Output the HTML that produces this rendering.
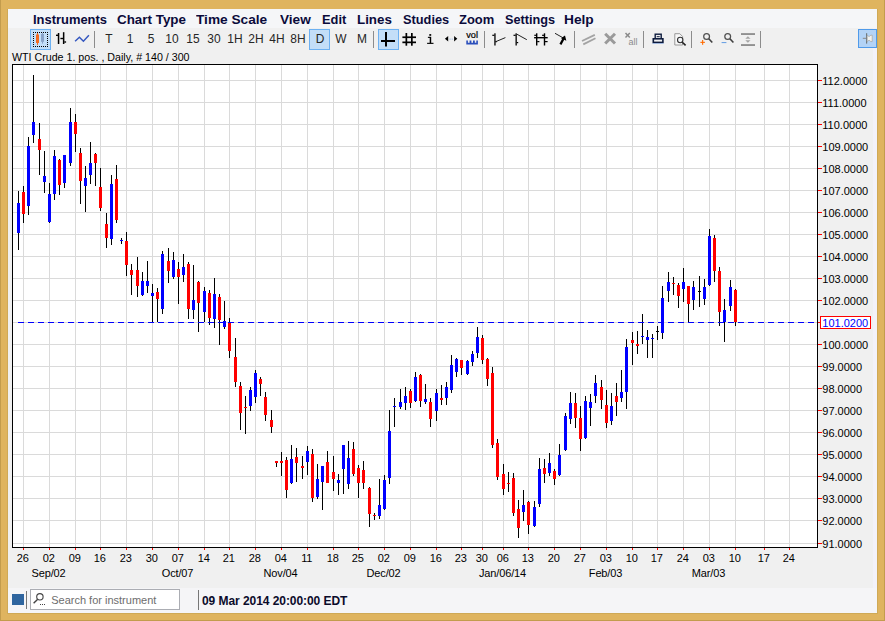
<!DOCTYPE html>
<html><head><meta charset="utf-8"><title>WTI Crude</title>
<style>
html,body{margin:0;padding:0;}
body{width:885px;height:621px;overflow:hidden;background:#dfb45f;font-family:"Liberation Sans",sans-serif;position:relative;}
#win{position:absolute;left:8px;top:9px;width:869px;height:604px;background:#f0f0f0;}
#status{position:absolute;left:8px;top:588px;width:869px;height:25px;background:#f5f5f7;}
#rstrip{position:absolute;left:873px;top:28px;width:4px;height:560px;background:#f3f2f9;}
.edge{position:absolute;background:#c39c4d;}
#menubar{position:absolute;left:8px;top:9px;width:869px;height:19px;background:#f5f6f8;}
.mi{position:absolute;top:12px;height:16px;line-height:16px;font-size:13px;font-weight:bold;color:#0b0b3b;white-space:nowrap;transform-origin:0 0;}
.tt{position:absolute;top:31px;width:30px;height:16px;line-height:16px;font-size:13px;color:#262626;text-align:center;white-space:nowrap;transform:scaleX(0.92);}
.sel{position:absolute;box-sizing:border-box;background:#c3def8;border:1px solid #6db1f2;}
#title{position:absolute;left:12px;top:51px;font-size:10.67px;line-height:12px;color:#000;white-space:nowrap;}
svg{position:absolute;left:0;top:0;}
.ax{font-family:"Liberation Sans",sans-serif;font-size:11px;fill:#000;}
#sq{position:absolute;left:12px;top:594px;width:11.6px;height:11.4px;background:#2f659f;}
#sep1{position:absolute;left:26px;top:591px;width:1px;height:18px;background:#777;}
#search{position:absolute;box-sizing:border-box;left:30px;top:589px;width:150px;height:21px;background:#fff;border:1px solid #abadb3;}
#search span{position:absolute;left:20.2px;top:3px;font-size:11px;line-height:14px;color:#6d6d6d;white-space:nowrap;}
#sep2{position:absolute;left:198px;top:590px;width:1px;height:20px;background:#777;}
#dt{position:absolute;left:202px;top:594px;font-size:12px;line-height:14px;font-weight:bold;color:#0b0b2b;letter-spacing:-0.06px;white-space:nowrap;}
</style></head><body>
<div id="win"></div><div id="status"></div><div id="rstrip"></div>
<div class="edge" style="left:0;top:0;width:1px;height:621px"></div><div class="edge" style="left:884px;top:0;width:1px;height:621px"></div><div class="edge" style="left:0;top:620px;width:885px;height:1px"></div>
<div class="edge" style="left:7px;top:9px;width:1px;height:605px;background:#cfa956"></div><div class="edge" style="left:877px;top:9px;width:1px;height:605px;background:#cfa956"></div><div class="edge" style="left:7px;top:613px;width:871px;height:1px;background:#cfa956"></div>
<div id="menubar"></div>
<span class="mi" style="left:33.38px;transform:scaleX(0.9948)">Instruments</span><span class="mi" style="left:116.92px;transform:scaleX(1.0308)">Chart Type</span><span class="mi" style="left:196.42px;transform:scaleX(1.0514)">Time Scale</span><span class="mi" style="left:279.91px;transform:scaleX(1.0460)">View</span><span class="mi" style="left:322.11px;transform:scaleX(0.9882)">Edit</span><span class="mi" style="left:356.98px;transform:scaleX(1.0277)">Lines</span><span class="mi" style="left:402.87px;transform:scaleX(0.9838)">Studies</span><span class="mi" style="left:459.05px;transform:scaleX(0.9950)">Zoom</span><span class="mi" style="left:504.87px;transform:scaleX(0.9765)">Settings</span><span class="mi" style="left:564.32px;transform:scaleX(1.0561)">Help</span>
<div class="sel" style="left:30px;top:29px;width:21px;height:21px"></div>
<div class="sel" style="left:309px;top:29px;width:21px;height:21px"></div>
<div class="sel" style="left:378px;top:29px;width:21px;height:21px"></div>
<div class="sel" style="left:858px;top:29px;width:19px;height:19px;background:#b3d3f6;border-color:#4f9aea"></div>
<span class="tt" style="left:93.5px">T</span><span class="tt" style="left:115px">1</span><span class="tt" style="left:136px">5</span><span class="tt" style="left:157px">10</span><span class="tt" style="left:178px">15</span><span class="tt" style="left:199px">30</span><span class="tt" style="left:220px">1H</span><span class="tt" style="left:241px">2H</span><span class="tt" style="left:262px">4H</span><span class="tt" style="left:283px">8H</span><span class="tt" style="left:304.5px">D</span><span class="tt" style="left:325.5px">W</span><span class="tt" style="left:346.5px">M</span>
<div id="title">WTI Crude 1. pos. , Daily, # 140 / 300</div>
<svg width="885" height="621" viewBox="0 0 885 621" shape-rendering="crispEdges">
<rect x="12" y="64" width="806" height="484" fill="#ffffff"/>
<rect x="23" y="65" width="1" height="482" fill="#dadada"/>
<rect x="49" y="65" width="1" height="482" fill="#dadada"/>
<rect x="75" y="65" width="1" height="482" fill="#dadada"/>
<rect x="100" y="65" width="1" height="482" fill="#dadada"/>
<rect x="126" y="65" width="1" height="482" fill="#dadada"/>
<rect x="152" y="65" width="1" height="482" fill="#dadada"/>
<rect x="178" y="65" width="1" height="482" fill="#dadada"/>
<rect x="204" y="65" width="1" height="482" fill="#dadada"/>
<rect x="229" y="65" width="1" height="482" fill="#dadada"/>
<rect x="255" y="65" width="1" height="482" fill="#dadada"/>
<rect x="281" y="65" width="1" height="482" fill="#dadada"/>
<rect x="307" y="65" width="1" height="482" fill="#dadada"/>
<rect x="333" y="65" width="1" height="482" fill="#dadada"/>
<rect x="358" y="65" width="1" height="482" fill="#dadada"/>
<rect x="384" y="65" width="1" height="482" fill="#dadada"/>
<rect x="410" y="65" width="1" height="482" fill="#dadada"/>
<rect x="436" y="65" width="1" height="482" fill="#dadada"/>
<rect x="461" y="65" width="1" height="482" fill="#dadada"/>
<rect x="482" y="65" width="1" height="482" fill="#dadada"/>
<rect x="503" y="65" width="1" height="482" fill="#dadada"/>
<rect x="528" y="65" width="1" height="482" fill="#dadada"/>
<rect x="554" y="65" width="1" height="482" fill="#dadada"/>
<rect x="580" y="65" width="1" height="482" fill="#dadada"/>
<rect x="606" y="65" width="1" height="482" fill="#dadada"/>
<rect x="632" y="65" width="1" height="482" fill="#dadada"/>
<rect x="657" y="65" width="1" height="482" fill="#dadada"/>
<rect x="683" y="65" width="1" height="482" fill="#dadada"/>
<rect x="709" y="65" width="1" height="482" fill="#dadada"/>
<rect x="735" y="65" width="1" height="482" fill="#dadada"/>
<rect x="764" y="65" width="1" height="482" fill="#dadada"/>
<rect x="789" y="65" width="1" height="482" fill="#dadada"/>
<rect x="13" y="80" width="804" height="1" fill="#dadada"/>
<rect x="13" y="102" width="804" height="1" fill="#dadada"/>
<rect x="13" y="124" width="804" height="1" fill="#dadada"/>
<rect x="13" y="146" width="804" height="1" fill="#dadada"/>
<rect x="13" y="168" width="804" height="1" fill="#dadada"/>
<rect x="13" y="190" width="804" height="1" fill="#dadada"/>
<rect x="13" y="212" width="804" height="1" fill="#dadada"/>
<rect x="13" y="234" width="804" height="1" fill="#dadada"/>
<rect x="13" y="256" width="804" height="1" fill="#dadada"/>
<rect x="13" y="278" width="804" height="1" fill="#dadada"/>
<rect x="13" y="300" width="804" height="1" fill="#dadada"/>
<rect x="13" y="322" width="804" height="1" fill="#dadada"/>
<rect x="13" y="344" width="804" height="1" fill="#dadada"/>
<rect x="13" y="366" width="804" height="1" fill="#dadada"/>
<rect x="13" y="388" width="804" height="1" fill="#dadada"/>
<rect x="13" y="410" width="804" height="1" fill="#dadada"/>
<rect x="13" y="432" width="804" height="1" fill="#dadada"/>
<rect x="13" y="454" width="804" height="1" fill="#dadada"/>
<rect x="13" y="476" width="804" height="1" fill="#dadada"/>
<rect x="13" y="498" width="804" height="1" fill="#dadada"/>
<rect x="13" y="520" width="804" height="1" fill="#dadada"/>
<rect x="13" y="543" width="804" height="1" fill="#dadada"/>
<rect x="18" y="191" width="1" height="59" fill="#000"/>
<rect x="17" y="203" width="3" height="30" fill="#0000ff"/>
<rect x="23" y="186" width="1" height="37" fill="#000"/>
<rect x="22" y="192" width="3" height="22" fill="#ff0000"/>
<rect x="28" y="137" width="1" height="78" fill="#000"/>
<rect x="27" y="146" width="3" height="60" fill="#0000ff"/>
<rect x="33" y="75" width="1" height="68" fill="#000"/>
<rect x="32" y="122" width="3" height="13" fill="#0000ff"/>
<rect x="39" y="123" width="1" height="52" fill="#000"/>
<rect x="38" y="139" width="3" height="11" fill="#ff0000"/>
<rect x="44" y="151" width="1" height="42" fill="#000"/>
<rect x="43" y="176" width="3" height="6" fill="#0000ff"/>
<rect x="49" y="183" width="1" height="40" fill="#000"/>
<rect x="48" y="194" width="3" height="28" fill="#0000ff"/>
<rect x="54" y="150" width="1" height="50" fill="#000"/>
<rect x="53" y="156" width="3" height="38" fill="#0000ff"/>
<rect x="59" y="159" width="1" height="36" fill="#000"/>
<rect x="58" y="160" width="3" height="25" fill="#ff0000"/>
<rect x="64" y="155" width="1" height="33" fill="#000"/>
<rect x="63" y="155" width="3" height="28" fill="#0000ff"/>
<rect x="70" y="108" width="1" height="58" fill="#000"/>
<rect x="69" y="122" width="3" height="41" fill="#0000ff"/>
<rect x="75" y="114" width="1" height="38" fill="#000"/>
<rect x="74" y="122" width="3" height="12" fill="#ff0000"/>
<rect x="80" y="148" width="1" height="56" fill="#000"/>
<rect x="79" y="153" width="3" height="28" fill="#ff0000"/>
<rect x="85" y="166" width="1" height="46" fill="#000"/>
<rect x="84" y="178" width="3" height="8" fill="#0000ff"/>
<rect x="90" y="142" width="1" height="42" fill="#000"/>
<rect x="89" y="163" width="3" height="12" fill="#0000ff"/>
<rect x="95" y="153" width="1" height="33" fill="#000"/>
<rect x="94" y="154" width="3" height="9" fill="#ff0000"/>
<rect x="100" y="168" width="1" height="43" fill="#000"/>
<rect x="99" y="187" width="3" height="21" fill="#ff0000"/>
<rect x="106" y="213" width="1" height="35" fill="#000"/>
<rect x="105" y="224" width="3" height="14" fill="#ff0000"/>
<rect x="111" y="175" width="1" height="70" fill="#000"/>
<rect x="110" y="184" width="3" height="55" fill="#0000ff"/>
<rect x="116" y="165" width="1" height="58" fill="#000"/>
<rect x="115" y="179" width="3" height="41" fill="#ff0000"/>
<rect x="121" y="238" width="1" height="6" fill="#000"/>
<rect x="120" y="240" width="3" height="1" fill="#0000ff"/>
<rect x="126" y="232" width="1" height="44" fill="#000"/>
<rect x="125" y="241" width="3" height="24" fill="#ff0000"/>
<rect x="131" y="264" width="1" height="31" fill="#000"/>
<rect x="130" y="270" width="3" height="5" fill="#ff0000"/>
<rect x="137" y="257" width="1" height="40" fill="#000"/>
<rect x="136" y="270" width="3" height="16" fill="#ff0000"/>
<rect x="142" y="272" width="1" height="24" fill="#000"/>
<rect x="141" y="281" width="3" height="14" fill="#0000ff"/>
<rect x="147" y="261" width="1" height="32" fill="#000"/>
<rect x="146" y="281" width="3" height="5" fill="#0000ff"/>
<rect x="152" y="284" width="1" height="38" fill="#000"/>
<rect x="151" y="293" width="3" height="3" fill="#0000ff"/>
<rect x="157" y="288" width="1" height="34" fill="#000"/>
<rect x="156" y="292" width="3" height="7" fill="#ff0000"/>
<rect x="162" y="251" width="1" height="63" fill="#000"/>
<rect x="161" y="254" width="3" height="55" fill="#0000ff"/>
<rect x="168" y="248" width="1" height="35" fill="#000"/>
<rect x="167" y="261" width="3" height="10" fill="#ff0000"/>
<rect x="173" y="252" width="1" height="27" fill="#000"/>
<rect x="172" y="260" width="3" height="17" fill="#0000ff"/>
<rect x="178" y="262" width="1" height="42" fill="#000"/>
<rect x="177" y="269" width="3" height="8" fill="#ff0000"/>
<rect x="183" y="254" width="1" height="28" fill="#000"/>
<rect x="182" y="267" width="3" height="8" fill="#0000ff"/>
<rect x="188" y="262" width="1" height="57" fill="#000"/>
<rect x="187" y="264" width="3" height="45" fill="#ff0000"/>
<rect x="193" y="265" width="1" height="54" fill="#000"/>
<rect x="192" y="300" width="3" height="10" fill="#0000ff"/>
<rect x="198" y="281" width="1" height="51" fill="#000"/>
<rect x="197" y="282" width="3" height="21" fill="#ff0000"/>
<rect x="204" y="287" width="1" height="35" fill="#000"/>
<rect x="203" y="291" width="3" height="21" fill="#0000ff"/>
<rect x="209" y="290" width="1" height="35" fill="#000"/>
<rect x="208" y="293" width="3" height="25" fill="#ff0000"/>
<rect x="214" y="278" width="1" height="50" fill="#000"/>
<rect x="213" y="294" width="3" height="25" fill="#0000ff"/>
<rect x="219" y="294" width="1" height="51" fill="#000"/>
<rect x="218" y="297" width="3" height="23" fill="#ff0000"/>
<rect x="224" y="301" width="1" height="28" fill="#000"/>
<rect x="223" y="321" width="3" height="6" fill="#0000ff"/>
<rect x="229" y="318" width="1" height="40" fill="#000"/>
<rect x="228" y="323" width="3" height="28" fill="#ff0000"/>
<rect x="235" y="338" width="1" height="49" fill="#000"/>
<rect x="234" y="357" width="3" height="25" fill="#ff0000"/>
<rect x="240" y="382" width="1" height="48" fill="#000"/>
<rect x="239" y="386" width="3" height="27" fill="#ff0000"/>
<rect x="245" y="396" width="1" height="38" fill="#000"/>
<rect x="244" y="407" width="3" height="1" fill="#ff0000"/>
<rect x="250" y="387" width="1" height="24" fill="#000"/>
<rect x="249" y="390" width="3" height="16" fill="#0000ff"/>
<rect x="255" y="370" width="1" height="33" fill="#000"/>
<rect x="254" y="373" width="3" height="24" fill="#0000ff"/>
<rect x="260" y="377" width="1" height="19" fill="#000"/>
<rect x="259" y="379" width="3" height="5" fill="#ff0000"/>
<rect x="265" y="392" width="1" height="29" fill="#000"/>
<rect x="264" y="397" width="3" height="18" fill="#ff0000"/>
<rect x="271" y="410" width="1" height="23" fill="#000"/>
<rect x="270" y="420" width="3" height="7" fill="#ff0000"/>
<rect x="276" y="461" width="1" height="6" fill="#000"/>
<rect x="275" y="461" width="3" height="2" fill="#ff0000"/>
<rect x="281" y="452" width="1" height="24" fill="#000"/>
<rect x="280" y="461" width="3" height="2" fill="#ff0000"/>
<rect x="286" y="457" width="1" height="41" fill="#000"/>
<rect x="285" y="460" width="3" height="30" fill="#ff0000"/>
<rect x="291" y="445" width="1" height="39" fill="#000"/>
<rect x="290" y="459" width="3" height="24" fill="#0000ff"/>
<rect x="296" y="448" width="1" height="34" fill="#000"/>
<rect x="295" y="457" width="3" height="6" fill="#ff0000"/>
<rect x="302" y="456" width="1" height="23" fill="#000"/>
<rect x="301" y="466" width="3" height="2" fill="#ff0000"/>
<rect x="307" y="446" width="1" height="29" fill="#000"/>
<rect x="306" y="451" width="3" height="11" fill="#0000ff"/>
<rect x="312" y="449" width="1" height="53" fill="#000"/>
<rect x="311" y="454" width="3" height="44" fill="#ff0000"/>
<rect x="317" y="464" width="1" height="35" fill="#000"/>
<rect x="316" y="479" width="3" height="18" fill="#0000ff"/>
<rect x="322" y="466" width="1" height="44" fill="#000"/>
<rect x="321" y="466" width="3" height="16" fill="#0000ff"/>
<rect x="327" y="451" width="1" height="32" fill="#000"/>
<rect x="326" y="462" width="3" height="21" fill="#ff0000"/>
<rect x="333" y="456" width="1" height="35" fill="#000"/>
<rect x="332" y="472" width="3" height="7" fill="#ff0000"/>
<rect x="338" y="474" width="1" height="21" fill="#000"/>
<rect x="337" y="480" width="3" height="3" fill="#0000ff"/>
<rect x="343" y="445" width="1" height="49" fill="#000"/>
<rect x="342" y="445" width="3" height="24" fill="#0000ff"/>
<rect x="348" y="441" width="1" height="48" fill="#000"/>
<rect x="347" y="458" width="3" height="26" fill="#0000ff"/>
<rect x="353" y="442" width="1" height="34" fill="#000"/>
<rect x="352" y="449" width="3" height="25" fill="#ff0000"/>
<rect x="358" y="465" width="1" height="33" fill="#000"/>
<rect x="357" y="468" width="3" height="15" fill="#ff0000"/>
<rect x="363" y="461" width="1" height="28" fill="#000"/>
<rect x="362" y="470" width="3" height="13" fill="#ff0000"/>
<rect x="369" y="487" width="1" height="40" fill="#000"/>
<rect x="368" y="488" width="3" height="26" fill="#ff0000"/>
<rect x="374" y="513" width="1" height="7" fill="#000"/>
<rect x="373" y="515" width="3" height="1" fill="#ff0000"/>
<rect x="379" y="479" width="1" height="40" fill="#000"/>
<rect x="378" y="505" width="3" height="11" fill="#0000ff"/>
<rect x="384" y="475" width="1" height="35" fill="#000"/>
<rect x="383" y="480" width="3" height="29" fill="#0000ff"/>
<rect x="389" y="410" width="1" height="74" fill="#000"/>
<rect x="388" y="431" width="3" height="47" fill="#0000ff"/>
<rect x="394" y="398" width="1" height="29" fill="#000"/>
<rect x="393" y="406" width="3" height="1" fill="#0000ff"/>
<rect x="400" y="389" width="1" height="20" fill="#000"/>
<rect x="399" y="402" width="3" height="5" fill="#0000ff"/>
<rect x="405" y="387" width="1" height="23" fill="#000"/>
<rect x="404" y="396" width="3" height="7" fill="#0000ff"/>
<rect x="410" y="389" width="1" height="19" fill="#000"/>
<rect x="409" y="391" width="3" height="12" fill="#ff0000"/>
<rect x="415" y="372" width="1" height="30" fill="#000"/>
<rect x="414" y="377" width="3" height="24" fill="#0000ff"/>
<rect x="420" y="374" width="1" height="33" fill="#000"/>
<rect x="419" y="375" width="3" height="26" fill="#ff0000"/>
<rect x="425" y="384" width="1" height="20" fill="#000"/>
<rect x="424" y="399" width="3" height="3" fill="#0000ff"/>
<rect x="430" y="398" width="1" height="29" fill="#000"/>
<rect x="429" y="402" width="3" height="17" fill="#ff0000"/>
<rect x="436" y="389" width="1" height="32" fill="#000"/>
<rect x="435" y="393" width="3" height="18" fill="#0000ff"/>
<rect x="441" y="385" width="1" height="20" fill="#000"/>
<rect x="440" y="398" width="3" height="2" fill="#ff0000"/>
<rect x="446" y="382" width="1" height="23" fill="#000"/>
<rect x="445" y="387" width="3" height="11" fill="#0000ff"/>
<rect x="451" y="355" width="1" height="38" fill="#000"/>
<rect x="450" y="365" width="3" height="25" fill="#0000ff"/>
<rect x="456" y="358" width="1" height="19" fill="#000"/>
<rect x="455" y="359" width="3" height="13" fill="#0000ff"/>
<rect x="461" y="360" width="1" height="15" fill="#000"/>
<rect x="460" y="360" width="3" height="8" fill="#ff0000"/>
<rect x="467" y="360" width="1" height="15" fill="#000"/>
<rect x="466" y="361" width="3" height="13" fill="#0000ff"/>
<rect x="472" y="351" width="1" height="15" fill="#000"/>
<rect x="471" y="354" width="3" height="8" fill="#0000ff"/>
<rect x="477" y="327" width="1" height="31" fill="#000"/>
<rect x="476" y="337" width="3" height="16" fill="#0000ff"/>
<rect x="482" y="335" width="1" height="29" fill="#000"/>
<rect x="481" y="338" width="3" height="22" fill="#ff0000"/>
<rect x="487" y="358" width="1" height="28" fill="#000"/>
<rect x="486" y="359" width="3" height="20" fill="#ff0000"/>
<rect x="492" y="367" width="1" height="81" fill="#000"/>
<rect x="491" y="373" width="3" height="72" fill="#ff0000"/>
<rect x="497" y="439" width="1" height="41" fill="#000"/>
<rect x="496" y="443" width="3" height="34" fill="#ff0000"/>
<rect x="503" y="464" width="1" height="31" fill="#000"/>
<rect x="502" y="474" width="3" height="15" fill="#ff0000"/>
<rect x="508" y="472" width="1" height="20" fill="#000"/>
<rect x="507" y="483" width="3" height="1" fill="#ff0000"/>
<rect x="513" y="473" width="1" height="43" fill="#000"/>
<rect x="512" y="478" width="3" height="35" fill="#ff0000"/>
<rect x="518" y="500" width="1" height="38" fill="#000"/>
<rect x="517" y="509" width="3" height="19" fill="#ff0000"/>
<rect x="523" y="490" width="1" height="31" fill="#000"/>
<rect x="522" y="505" width="3" height="7" fill="#0000ff"/>
<rect x="528" y="501" width="1" height="33" fill="#000"/>
<rect x="527" y="502" width="3" height="23" fill="#ff0000"/>
<rect x="534" y="501" width="1" height="26" fill="#000"/>
<rect x="533" y="507" width="3" height="19" fill="#0000ff"/>
<rect x="539" y="458" width="1" height="49" fill="#000"/>
<rect x="538" y="469" width="3" height="35" fill="#0000ff"/>
<rect x="544" y="459" width="1" height="24" fill="#000"/>
<rect x="543" y="468" width="3" height="6" fill="#ff0000"/>
<rect x="549" y="453" width="1" height="23" fill="#000"/>
<rect x="548" y="463" width="3" height="10" fill="#0000ff"/>
<rect x="554" y="469" width="1" height="16" fill="#000"/>
<rect x="553" y="471" width="3" height="8" fill="#ff0000"/>
<rect x="559" y="444" width="1" height="32" fill="#000"/>
<rect x="558" y="455" width="3" height="20" fill="#0000ff"/>
<rect x="565" y="413" width="1" height="38" fill="#000"/>
<rect x="564" y="416" width="3" height="34" fill="#0000ff"/>
<rect x="570" y="392" width="1" height="32" fill="#000"/>
<rect x="569" y="403" width="3" height="16" fill="#0000ff"/>
<rect x="575" y="393" width="1" height="35" fill="#000"/>
<rect x="574" y="403" width="3" height="15" fill="#ff0000"/>
<rect x="580" y="406" width="1" height="45" fill="#000"/>
<rect x="579" y="418" width="3" height="21" fill="#ff0000"/>
<rect x="585" y="396" width="1" height="43" fill="#000"/>
<rect x="584" y="401" width="3" height="37" fill="#0000ff"/>
<rect x="590" y="394" width="1" height="32" fill="#000"/>
<rect x="589" y="402" width="3" height="6" fill="#0000ff"/>
<rect x="595" y="375" width="1" height="28" fill="#000"/>
<rect x="594" y="383" width="3" height="13" fill="#0000ff"/>
<rect x="601" y="380" width="1" height="29" fill="#000"/>
<rect x="600" y="387" width="3" height="13" fill="#ff0000"/>
<rect x="606" y="390" width="1" height="38" fill="#000"/>
<rect x="605" y="405" width="3" height="18" fill="#ff0000"/>
<rect x="611" y="393" width="1" height="32" fill="#000"/>
<rect x="610" y="406" width="3" height="15" fill="#0000ff"/>
<rect x="616" y="383" width="1" height="33" fill="#000"/>
<rect x="615" y="396" width="3" height="6" fill="#ff0000"/>
<rect x="621" y="370" width="1" height="32" fill="#000"/>
<rect x="620" y="392" width="3" height="6" fill="#0000ff"/>
<rect x="626" y="339" width="1" height="70" fill="#000"/>
<rect x="625" y="347" width="3" height="45" fill="#0000ff"/>
<rect x="632" y="332" width="1" height="33" fill="#000"/>
<rect x="631" y="340" width="3" height="3" fill="#ff0000"/>
<rect x="637" y="331" width="1" height="23" fill="#000"/>
<rect x="636" y="344" width="3" height="2" fill="#ff0000"/>
<rect x="642" y="314" width="1" height="30" fill="#000"/>
<rect x="641" y="336" width="3" height="1" fill="#0000ff"/>
<rect x="647" y="330" width="1" height="28" fill="#000"/>
<rect x="646" y="337" width="3" height="3" fill="#0000ff"/>
<rect x="652" y="334" width="1" height="24" fill="#000"/>
<rect x="651" y="338" width="3" height="1" fill="#0000ff"/>
<rect x="657" y="326" width="1" height="14" fill="#000"/>
<rect x="656" y="331" width="3" height="1" fill="#000000"/>
<rect x="662" y="286" width="1" height="53" fill="#000"/>
<rect x="661" y="298" width="3" height="35" fill="#0000ff"/>
<rect x="668" y="272" width="1" height="30" fill="#000"/>
<rect x="667" y="282" width="3" height="9" fill="#0000ff"/>
<rect x="673" y="277" width="1" height="18" fill="#000"/>
<rect x="672" y="283" width="3" height="1" fill="#ff0000"/>
<rect x="678" y="283" width="1" height="25" fill="#000"/>
<rect x="677" y="285" width="3" height="11" fill="#ff0000"/>
<rect x="683" y="268" width="1" height="34" fill="#000"/>
<rect x="682" y="282" width="3" height="7" fill="#0000ff"/>
<rect x="688" y="286" width="1" height="36" fill="#000"/>
<rect x="687" y="286" width="3" height="18" fill="#ff0000"/>
<rect x="693" y="281" width="1" height="29" fill="#000"/>
<rect x="692" y="287" width="3" height="13" fill="#0000ff"/>
<rect x="699" y="276" width="1" height="31" fill="#000"/>
<rect x="698" y="291" width="3" height="1" fill="#000000"/>
<rect x="704" y="279" width="1" height="26" fill="#000"/>
<rect x="703" y="287" width="3" height="12" fill="#0000ff"/>
<rect x="709" y="229" width="1" height="57" fill="#000"/>
<rect x="708" y="236" width="3" height="49" fill="#0000ff"/>
<rect x="714" y="235" width="1" height="47" fill="#000"/>
<rect x="713" y="238" width="3" height="33" fill="#ff0000"/>
<rect x="719" y="267" width="1" height="59" fill="#000"/>
<rect x="718" y="271" width="3" height="41" fill="#ff0000"/>
<rect x="724" y="299" width="1" height="43" fill="#000"/>
<rect x="723" y="310" width="3" height="12" fill="#0000ff"/>
<rect x="730" y="280" width="1" height="31" fill="#000"/>
<rect x="729" y="287" width="3" height="19" fill="#0000ff"/>
<rect x="735" y="289" width="1" height="37" fill="#000"/>
<rect x="734" y="290" width="3" height="32" fill="#ff0000"/>
<rect x="18" y="322" width="6" height="1" fill="#0000ff"/>
<rect x="28" y="322" width="6" height="1" fill="#0000ff"/>
<rect x="38" y="322" width="6" height="1" fill="#0000ff"/>
<rect x="48" y="322" width="6" height="1" fill="#0000ff"/>
<rect x="58" y="322" width="6" height="1" fill="#0000ff"/>
<rect x="68" y="322" width="6" height="1" fill="#0000ff"/>
<rect x="78" y="322" width="6" height="1" fill="#0000ff"/>
<rect x="88" y="322" width="6" height="1" fill="#0000ff"/>
<rect x="98" y="322" width="6" height="1" fill="#0000ff"/>
<rect x="108" y="322" width="6" height="1" fill="#0000ff"/>
<rect x="118" y="322" width="6" height="1" fill="#0000ff"/>
<rect x="128" y="322" width="6" height="1" fill="#0000ff"/>
<rect x="138" y="322" width="6" height="1" fill="#0000ff"/>
<rect x="148" y="322" width="6" height="1" fill="#0000ff"/>
<rect x="158" y="322" width="6" height="1" fill="#0000ff"/>
<rect x="168" y="322" width="6" height="1" fill="#0000ff"/>
<rect x="178" y="322" width="6" height="1" fill="#0000ff"/>
<rect x="188" y="322" width="6" height="1" fill="#0000ff"/>
<rect x="198" y="322" width="6" height="1" fill="#0000ff"/>
<rect x="208" y="322" width="6" height="1" fill="#0000ff"/>
<rect x="218" y="322" width="6" height="1" fill="#0000ff"/>
<rect x="228" y="322" width="6" height="1" fill="#0000ff"/>
<rect x="238" y="322" width="6" height="1" fill="#0000ff"/>
<rect x="248" y="322" width="6" height="1" fill="#0000ff"/>
<rect x="258" y="322" width="6" height="1" fill="#0000ff"/>
<rect x="268" y="322" width="6" height="1" fill="#0000ff"/>
<rect x="278" y="322" width="6" height="1" fill="#0000ff"/>
<rect x="288" y="322" width="6" height="1" fill="#0000ff"/>
<rect x="298" y="322" width="6" height="1" fill="#0000ff"/>
<rect x="308" y="322" width="6" height="1" fill="#0000ff"/>
<rect x="318" y="322" width="6" height="1" fill="#0000ff"/>
<rect x="328" y="322" width="6" height="1" fill="#0000ff"/>
<rect x="338" y="322" width="6" height="1" fill="#0000ff"/>
<rect x="348" y="322" width="6" height="1" fill="#0000ff"/>
<rect x="358" y="322" width="6" height="1" fill="#0000ff"/>
<rect x="368" y="322" width="6" height="1" fill="#0000ff"/>
<rect x="378" y="322" width="6" height="1" fill="#0000ff"/>
<rect x="388" y="322" width="6" height="1" fill="#0000ff"/>
<rect x="398" y="322" width="6" height="1" fill="#0000ff"/>
<rect x="408" y="322" width="6" height="1" fill="#0000ff"/>
<rect x="418" y="322" width="6" height="1" fill="#0000ff"/>
<rect x="428" y="322" width="6" height="1" fill="#0000ff"/>
<rect x="438" y="322" width="6" height="1" fill="#0000ff"/>
<rect x="448" y="322" width="6" height="1" fill="#0000ff"/>
<rect x="458" y="322" width="6" height="1" fill="#0000ff"/>
<rect x="468" y="322" width="6" height="1" fill="#0000ff"/>
<rect x="478" y="322" width="6" height="1" fill="#0000ff"/>
<rect x="488" y="322" width="6" height="1" fill="#0000ff"/>
<rect x="498" y="322" width="6" height="1" fill="#0000ff"/>
<rect x="508" y="322" width="6" height="1" fill="#0000ff"/>
<rect x="518" y="322" width="6" height="1" fill="#0000ff"/>
<rect x="528" y="322" width="6" height="1" fill="#0000ff"/>
<rect x="538" y="322" width="6" height="1" fill="#0000ff"/>
<rect x="548" y="322" width="6" height="1" fill="#0000ff"/>
<rect x="558" y="322" width="6" height="1" fill="#0000ff"/>
<rect x="568" y="322" width="6" height="1" fill="#0000ff"/>
<rect x="578" y="322" width="6" height="1" fill="#0000ff"/>
<rect x="588" y="322" width="6" height="1" fill="#0000ff"/>
<rect x="598" y="322" width="6" height="1" fill="#0000ff"/>
<rect x="608" y="322" width="6" height="1" fill="#0000ff"/>
<rect x="618" y="322" width="6" height="1" fill="#0000ff"/>
<rect x="628" y="322" width="6" height="1" fill="#0000ff"/>
<rect x="638" y="322" width="6" height="1" fill="#0000ff"/>
<rect x="648" y="322" width="6" height="1" fill="#0000ff"/>
<rect x="658" y="322" width="6" height="1" fill="#0000ff"/>
<rect x="668" y="322" width="6" height="1" fill="#0000ff"/>
<rect x="678" y="322" width="6" height="1" fill="#0000ff"/>
<rect x="688" y="322" width="6" height="1" fill="#0000ff"/>
<rect x="698" y="322" width="6" height="1" fill="#0000ff"/>
<rect x="708" y="322" width="6" height="1" fill="#0000ff"/>
<rect x="718" y="322" width="6" height="1" fill="#0000ff"/>
<rect x="728" y="322" width="6" height="1" fill="#0000ff"/>
<rect x="738" y="322" width="6" height="1" fill="#0000ff"/>
<rect x="748" y="322" width="6" height="1" fill="#0000ff"/>
<rect x="758" y="322" width="6" height="1" fill="#0000ff"/>
<rect x="768" y="322" width="6" height="1" fill="#0000ff"/>
<rect x="778" y="322" width="6" height="1" fill="#0000ff"/>
<rect x="788" y="322" width="6" height="1" fill="#0000ff"/>
<rect x="798" y="322" width="6" height="1" fill="#0000ff"/>
<rect x="808" y="322" width="6" height="1" fill="#0000ff"/>
<rect x="12" y="64" width="806" height="1" fill="#000"/>
<rect x="12" y="547" width="806" height="1" fill="#000"/>
<rect x="12" y="64" width="1" height="484" fill="#000"/>
<rect x="817" y="64" width="1" height="484" fill="#000"/>
<rect x="818" y="80" width="4" height="1" fill="#ff0000"/>
<text x="822.3" y="84.6" class="ax">112.0000</text>
<rect x="818" y="102" width="4" height="1" fill="#ff0000"/>
<text x="822.3" y="106.6" class="ax">111.0000</text>
<rect x="818" y="124" width="4" height="1" fill="#ff0000"/>
<text x="822.3" y="128.6" class="ax">110.0000</text>
<rect x="818" y="146" width="4" height="1" fill="#ff0000"/>
<text x="822.3" y="150.6" class="ax">109.0000</text>
<rect x="818" y="168" width="4" height="1" fill="#ff0000"/>
<text x="822.3" y="172.6" class="ax">108.0000</text>
<rect x="818" y="190" width="4" height="1" fill="#ff0000"/>
<text x="822.3" y="194.6" class="ax">107.0000</text>
<rect x="818" y="212" width="4" height="1" fill="#ff0000"/>
<text x="822.3" y="216.6" class="ax">106.0000</text>
<rect x="818" y="234" width="4" height="1" fill="#ff0000"/>
<text x="822.3" y="238.6" class="ax">105.0000</text>
<rect x="818" y="256" width="4" height="1" fill="#ff0000"/>
<text x="822.3" y="260.6" class="ax">104.0000</text>
<rect x="818" y="278" width="4" height="1" fill="#ff0000"/>
<text x="822.3" y="282.6" class="ax">103.0000</text>
<rect x="818" y="300" width="4" height="1" fill="#ff0000"/>
<text x="822.3" y="304.6" class="ax">102.0000</text>
<rect x="818" y="322" width="4" height="1" fill="#ff0000"/>
<text x="822.3" y="326.6" class="ax">101.0000</text>
<rect x="818" y="344" width="4" height="1" fill="#ff0000"/>
<text x="822.3" y="348.6" class="ax">100.0000</text>
<rect x="818" y="366" width="4" height="1" fill="#ff0000"/>
<text x="822.3" y="370.6" class="ax">99.0000</text>
<rect x="818" y="388" width="4" height="1" fill="#ff0000"/>
<text x="822.3" y="392.6" class="ax">98.0000</text>
<rect x="818" y="410" width="4" height="1" fill="#ff0000"/>
<text x="822.3" y="414.6" class="ax">97.0000</text>
<rect x="818" y="432" width="4" height="1" fill="#ff0000"/>
<text x="822.3" y="436.6" class="ax">96.0000</text>
<rect x="818" y="454" width="4" height="1" fill="#ff0000"/>
<text x="822.3" y="458.6" class="ax">95.0000</text>
<rect x="818" y="476" width="4" height="1" fill="#ff0000"/>
<text x="822.3" y="480.6" class="ax">94.0000</text>
<rect x="818" y="498" width="4" height="1" fill="#ff0000"/>
<text x="822.3" y="502.6" class="ax">93.0000</text>
<rect x="818" y="520" width="4" height="1" fill="#ff0000"/>
<text x="822.3" y="524.6" class="ax">92.0000</text>
<rect x="818" y="543" width="4" height="1" fill="#ff0000"/>
<text x="822.3" y="547.6" class="ax">91.0000</text>
<rect x="23" y="548" width="1" height="2" fill="#ff0000"/>
<text x="22.7" y="562" class="ax" text-anchor="middle" letter-spacing="-0.2">26</text>
<rect x="49" y="548" width="1" height="2" fill="#ff0000"/>
<text x="48.7" y="562" class="ax" text-anchor="middle" letter-spacing="-0.2">02</text>
<rect x="75" y="548" width="1" height="2" fill="#ff0000"/>
<text x="74.7" y="562" class="ax" text-anchor="middle" letter-spacing="-0.2">09</text>
<rect x="100" y="548" width="1" height="2" fill="#ff0000"/>
<text x="99.7" y="562" class="ax" text-anchor="middle" letter-spacing="-0.2">16</text>
<rect x="126" y="548" width="1" height="2" fill="#ff0000"/>
<text x="125.7" y="562" class="ax" text-anchor="middle" letter-spacing="-0.2">23</text>
<rect x="152" y="548" width="1" height="2" fill="#ff0000"/>
<text x="151.7" y="562" class="ax" text-anchor="middle" letter-spacing="-0.2">30</text>
<rect x="178" y="548" width="1" height="2" fill="#ff0000"/>
<text x="177.7" y="562" class="ax" text-anchor="middle" letter-spacing="-0.2">07</text>
<rect x="204" y="548" width="1" height="2" fill="#ff0000"/>
<text x="203.7" y="562" class="ax" text-anchor="middle" letter-spacing="-0.2">14</text>
<rect x="229" y="548" width="1" height="2" fill="#ff0000"/>
<text x="228.7" y="562" class="ax" text-anchor="middle" letter-spacing="-0.2">21</text>
<rect x="255" y="548" width="1" height="2" fill="#ff0000"/>
<text x="254.7" y="562" class="ax" text-anchor="middle" letter-spacing="-0.2">28</text>
<rect x="281" y="548" width="1" height="2" fill="#ff0000"/>
<text x="280.7" y="562" class="ax" text-anchor="middle" letter-spacing="-0.2">04</text>
<rect x="307" y="548" width="1" height="2" fill="#ff0000"/>
<text x="306.7" y="562" class="ax" text-anchor="middle" letter-spacing="-0.2">11</text>
<rect x="333" y="548" width="1" height="2" fill="#ff0000"/>
<text x="332.7" y="562" class="ax" text-anchor="middle" letter-spacing="-0.2">18</text>
<rect x="358" y="548" width="1" height="2" fill="#ff0000"/>
<text x="357.7" y="562" class="ax" text-anchor="middle" letter-spacing="-0.2">25</text>
<rect x="384" y="548" width="1" height="2" fill="#ff0000"/>
<text x="383.7" y="562" class="ax" text-anchor="middle" letter-spacing="-0.2">02</text>
<rect x="410" y="548" width="1" height="2" fill="#ff0000"/>
<text x="409.7" y="562" class="ax" text-anchor="middle" letter-spacing="-0.2">09</text>
<rect x="436" y="548" width="1" height="2" fill="#ff0000"/>
<text x="435.7" y="562" class="ax" text-anchor="middle" letter-spacing="-0.2">16</text>
<rect x="461" y="548" width="1" height="2" fill="#ff0000"/>
<text x="460.7" y="562" class="ax" text-anchor="middle" letter-spacing="-0.2">23</text>
<rect x="482" y="548" width="1" height="2" fill="#ff0000"/>
<text x="481.7" y="562" class="ax" text-anchor="middle" letter-spacing="-0.2">30</text>
<rect x="503" y="548" width="1" height="2" fill="#ff0000"/>
<text x="502.7" y="562" class="ax" text-anchor="middle" letter-spacing="-0.2">06</text>
<rect x="528" y="548" width="1" height="2" fill="#ff0000"/>
<text x="527.7" y="562" class="ax" text-anchor="middle" letter-spacing="-0.2">13</text>
<rect x="554" y="548" width="1" height="2" fill="#ff0000"/>
<text x="553.7" y="562" class="ax" text-anchor="middle" letter-spacing="-0.2">20</text>
<rect x="580" y="548" width="1" height="2" fill="#ff0000"/>
<text x="579.7" y="562" class="ax" text-anchor="middle" letter-spacing="-0.2">27</text>
<rect x="606" y="548" width="1" height="2" fill="#ff0000"/>
<text x="605.7" y="562" class="ax" text-anchor="middle" letter-spacing="-0.2">03</text>
<rect x="632" y="548" width="1" height="2" fill="#ff0000"/>
<text x="631.7" y="562" class="ax" text-anchor="middle" letter-spacing="-0.2">10</text>
<rect x="657" y="548" width="1" height="2" fill="#ff0000"/>
<text x="656.7" y="562" class="ax" text-anchor="middle" letter-spacing="-0.2">17</text>
<rect x="683" y="548" width="1" height="2" fill="#ff0000"/>
<text x="682.7" y="562" class="ax" text-anchor="middle" letter-spacing="-0.2">24</text>
<rect x="709" y="548" width="1" height="2" fill="#ff0000"/>
<text x="708.7" y="562" class="ax" text-anchor="middle" letter-spacing="-0.2">03</text>
<rect x="735" y="548" width="1" height="2" fill="#ff0000"/>
<text x="734.7" y="562" class="ax" text-anchor="middle" letter-spacing="-0.2">10</text>
<rect x="764" y="548" width="1" height="2" fill="#ff0000"/>
<text x="763.7" y="562" class="ax" text-anchor="middle" letter-spacing="-0.2">17</text>
<rect x="789" y="548" width="1" height="2" fill="#ff0000"/>
<text x="788.7" y="562" class="ax" text-anchor="middle" letter-spacing="-0.2">24</text>
<text x="48.5" y="577" class="ax" text-anchor="middle" letter-spacing="-0.15">Sep/02</text>
<text x="177.5" y="577" class="ax" text-anchor="middle" letter-spacing="-0.15">Oct/07</text>
<text x="280.5" y="577" class="ax" text-anchor="middle" letter-spacing="-0.15">Nov/04</text>
<text x="383.5" y="577" class="ax" text-anchor="middle" letter-spacing="-0.15">Dec/02</text>
<text x="502.5" y="577" class="ax" text-anchor="middle" letter-spacing="-0.15">Jan/06/14</text>
<text x="605.5" y="577" class="ax" text-anchor="middle" letter-spacing="-0.15">Feb/03</text>
<text x="708.5" y="577" class="ax" text-anchor="middle" letter-spacing="-0.15">Mar/03</text>
<rect x="820.5" y="316.5" width="50" height="12" fill="#fff" stroke="#ff0000" stroke-width="1"/>
<text x="822.3" y="326.6" class="ax" fill="#0000ff" style="fill:#0000ff">101.0200</text>
</svg>
<div id="sq"></div><div id="sep1"></div>
<div id="search"><span>Search for instrument</span></div>
<div id="sep2"></div>
<div id="dt">09 Mar 2014 20:00:00 EDT</div>
<svg width="885" height="621" viewBox="0 0 885 621">
<!-- toolbar separators -->
<g fill="#8c8c8c">
<rect x="94" y="31" width="1" height="17"/>
<rect x="373" y="31" width="1" height="17"/>
<rect x="484" y="31" width="1" height="17"/>
<rect x="574" y="31" width="1" height="17"/>
<rect x="643" y="31" width="1" height="17"/>
<rect x="691" y="31" width="1" height="17"/>
<rect x="760" y="31" width="1" height="17"/>
</g>
<!-- candle icon (selected) -->
<g fill="#000" shape-rendering="crispEdges"><rect x="33" y="32" width="1" height="1"/><rect x="33" y="46" width="1" height="1"/><rect x="35" y="32" width="1" height="1"/><rect x="35" y="46" width="1" height="1"/><rect x="37" y="32" width="1" height="1"/><rect x="37" y="46" width="1" height="1"/><rect x="39" y="32" width="1" height="1"/><rect x="39" y="46" width="1" height="1"/><rect x="41" y="32" width="1" height="1"/><rect x="41" y="46" width="1" height="1"/><rect x="43" y="32" width="1" height="1"/><rect x="43" y="46" width="1" height="1"/><rect x="45" y="32" width="1" height="1"/><rect x="45" y="46" width="1" height="1"/><rect x="47" y="32" width="1" height="1"/><rect x="47" y="46" width="1" height="1"/><rect x="33" y="34" width="1" height="1"/><rect x="47" y="34" width="1" height="1"/><rect x="33" y="36" width="1" height="1"/><rect x="47" y="36" width="1" height="1"/><rect x="33" y="38" width="1" height="1"/><rect x="47" y="38" width="1" height="1"/><rect x="33" y="40" width="1" height="1"/><rect x="47" y="40" width="1" height="1"/><rect x="33" y="42" width="1" height="1"/><rect x="47" y="42" width="1" height="1"/><rect x="33" y="44" width="1" height="1"/><rect x="47" y="44" width="1" height="1"/></g>
<rect x="37" y="33" width="1" height="12" fill="#f26a21"/>
<rect x="36" y="34.5" width="3" height="8.5" fill="#f26a21"/>
<rect x="42" y="32.8" width="1" height="10.8" fill="#8aa3c8"/>
<rect x="41" y="34" width="3" height="7.8" fill="#8aa3c8"/>
<!-- bar icon -->
<g fill="#000">
<rect x="57.8" y="33" width="1.5" height="11"/>
<rect x="56" y="34.6" width="2" height="1.4"/>
<rect x="62.9" y="32.2" width="1.5" height="11.8"/>
<rect x="60.4" y="37.8" width="2.6" height="1.4"/>
<rect x="64.3" y="41.3" width="1.8" height="1.4"/>
</g>
<!-- line icon -->
<polyline points="75.1,41.2 79.4,37.3 83.4,41.2 88.9,35.3" fill="none" stroke="#3558c0" stroke-width="1.5"/>
<!-- crosshair -->
<rect x="385" y="32" width="2" height="14.5" fill="#000"/>
<rect x="381" y="40" width="14" height="2" fill="#000"/>
<!-- grid # -->
<g fill="#000">
<rect x="405.5" y="33" width="1.7" height="12.7"/>
<rect x="411" y="33" width="1.7" height="12.7"/>
<rect x="402.4" y="36.4" width="13.6" height="1.7"/>
<rect x="402.4" y="41.5" width="13.6" height="1.7"/>
</g>
<!-- i -->
<g fill="#000">
<rect x="429.3" y="34.1" width="1.9" height="1.7"/>
<rect x="429.7" y="36.8" width="1.5" height="6.4"/>
<rect x="427.9" y="36.8" width="2.2" height="1.1"/>
<rect x="427.1" y="42.8" width="6.4" height="1.1"/>
</g>
<!-- left-right arrows -->
<polygon points="444.9,38.8 448.2,36.1 448.2,41.5" fill="#000"/>
<polygon points="457.3,38.8 454.1,36.1 454.1,41.5" fill="#000"/>
<rect x="449.5" y="38.6" width="1.1" height="1.1" fill="#9bb8e0"/><rect x="451.7" y="38.6" width="1.1" height="1.1" fill="#9bb8e0"/>
<!-- vol -->
<text x="466.3" y="38.2" font-family="Liberation Sans" font-size="8.3px" fill="#000" stroke="#000" stroke-width="0.2" textLength="11.7" lengthAdjust="spacingAndGlyphs">vol</text>
<path d="M466.3,44.6 V40.5 H467.9 V42.7 H469.6 V40.5 H471.4 V42.7 H473 V40.5 H474.8 V42.7 H476.3 V40.5 H477.9 V44.6 Z" fill="#2b4fbc"/>
<!-- trend icon 1 -->
<g fill="#000">
<rect x="494.3" y="33.3" width="1.3" height="12.2"/>
<rect x="492.3" y="34.7" width="2.2" height="1.2"/>
<rect x="495.4" y="41" width="1.6" height="1.2"/>
</g>
<path d="M495.7,41.7 L505.4,37.6" stroke="#222" stroke-width="1" fill="none"/>
<!-- trend icon 2 -->
<g fill="#000">
<rect x="515.5" y="33.3" width="1.3" height="12.2"/>
<rect x="513.5" y="34.7" width="2.2" height="1.2"/>
<rect x="516.6" y="42" width="1.6" height="1.2"/>
</g>
<path d="M516.9,34.2 L526.8,39.7" stroke="#222" stroke-width="1" fill="none"/>
<!-- parallel bars icon -->
<g fill="#000">
<rect x="536" y="33.3" width="1.4" height="12.2"/>
<rect x="543.8" y="33.3" width="1.4" height="12.2"/>
<rect x="534.1" y="37" width="13.6" height="1.4"/>
<rect x="534.3" y="34.7" width="1.9" height="1.2"/>
<rect x="542.1" y="34.7" width="1.9" height="1.2"/>
<rect x="537.2" y="41" width="2.2" height="1.2"/>
<rect x="545" y="41" width="2.6" height="1.2"/>
</g>
<!-- arrow icon -->
<path d="M555,33.3 L562.8,37.7" stroke="#222" stroke-width="1" fill="none"/>
<path d="M560.4,44.4 L563.6,38.6" stroke="#000" stroke-width="2.2" fill="none"/>
<polygon points="565,35.6 566.3,40.8 561,38.2" fill="#000"/>
<!-- gray parallel lines -->
<g stroke="#a3a3a3" stroke-width="1.8" fill="none">
<path d="M582,41 L594.8,34.9"/>
<path d="M583.3,44.4 L595.5,38.3"/>
</g>
<!-- gray X -->
<g stroke="#9a9a9a" stroke-width="3" fill="none">
<path d="M605.2,33.7 L615,43.5"/>
<path d="M615,33.7 L605.2,43.5"/>
</g>
<!-- x all -->
<g stroke="#8a8a8a" stroke-width="1.5" fill="none">
<path d="M625.5,33 L629.8,37.4"/><path d="M629.8,33 L625.5,37.4"/>
</g>
<text x="628.5" y="45" font-family="Liberation Sans" font-size="8.5px" fill="#8a8a8a" textLength="9" lengthAdjust="spacingAndGlyphs">all</text>
<!-- print -->
<g fill="none" stroke="#0d1b3d">
<rect x="655.2" y="34.2" width="6" height="5" stroke-width="1.4"/>
<path d="M656.7,36.7 H659.7" stroke-width="1"/>
<rect x="653.3" y="38.8" width="9.6" height="3.6" stroke-width="1.6" fill="#f0f0f0"/>
</g>
<rect x="652.5" y="43" width="11" height="1" fill="#9fb6dc"/>
<!-- preview -->
<path d="M674.8,33.7 H679.8 L682.6,36.5 V45 H674.8 Z" fill="#f8f8f8" stroke="#8e8e8e" stroke-width="0.9"/>
<circle cx="680.2" cy="40" r="2.7" fill="#f4f6fa" stroke="#333" stroke-width="1.1"/>
<path d="M682.3,42.2 L685.6,45.4" stroke="#222" stroke-width="1.6"/>
<!-- zoom in -->
<circle cx="706.6" cy="36.4" r="2.9" fill="none" stroke="#505050" stroke-width="1.25"/>
<path d="M708.8,38.7 L712.3,42.5" stroke="#404040" stroke-width="1.6"/>
<rect x="700.4" y="41.8" width="4.5" height="1.1" fill="#ff6a00"/>
<rect x="702.1" y="40" width="1.1" height="4.8" fill="#ff6a00"/>
<!-- zoom out -->
<circle cx="727.7" cy="36.4" r="2.9" fill="none" stroke="#505050" stroke-width="1.25"/>
<path d="M729.9,38.7 L733.4,42.5" stroke="#404040" stroke-width="1.6"/>
<rect x="721.6" y="42" width="4.8" height="1.1" fill="#6ea3e4"/>
<!-- fit -->
<rect x="741" y="33.2" width="14" height="1.7" fill="#858585"/>
<rect x="741" y="44.2" width="14" height="1.7" fill="#858585"/>
<polygon points="747.9,36.2 750.5,38.8 745.3,38.8" fill="#a5a5a5"/>
<polygon points="747.9,42.8 750.5,40.2 745.3,40.2" fill="#a5a5a5"/>
<!-- pin -->
<g>
<path d="M862.8,38.3 H866.4" stroke="#8a8a8a" stroke-width="1"/>
<rect x="866" y="33.2" width="1.2" height="10.4" fill="#6f7a80"/>
<polygon points="867.2,35.3 869.1,36.6 870.9,35.2 872.2,35.2 872.2,41.6 870.9,41.6 869.1,40.2 867.2,41.5" fill="#f2f2ee" stroke="#a2a2a2" stroke-width="0.7"/>
</g>
<!-- search magnifier -->
<circle cx="39.9" cy="596.8" r="3.2" fill="none" stroke="#444" stroke-width="1.1"/>
<path d="M37.7,599.2 L33.6,603.3" stroke="#444" stroke-width="1.4"/>
<rect x="40" y="604" width="1" height="1" fill="#444"/><rect x="42" y="604" width="1" height="1" fill="#444"/><rect x="44" y="604" width="1" height="1" fill="#444"/>

</svg>
</body></html>
